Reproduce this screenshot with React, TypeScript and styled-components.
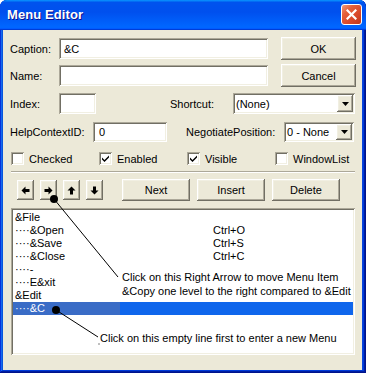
import React from "react";
import styled, { createGlobalStyle } from "styled-components";

const GlobalStyle = createGlobalStyle`
  html, body { margin: 0; padding: 0; background: #fff; }
  body { font-family: "Liberation Sans", Arial, sans-serif; font-size: 11px; color: #000; }
  * { box-sizing: border-box; }
`;

const sunken = `
  box-shadow: inset 1px 1px #aca899, inset -1px -1px #ffffff, inset 2px 2px #716f64, inset -2px -2px #f1efe2;
`;
const raised = `
  box-shadow: inset -1px -1px #716f64, inset 1px 1px #ffffff, inset -2px -2px #aca899, inset 2px 2px #f1efe2;
`;

const Window = styled.div`
  position: relative;
  width: 366px;
  height: 373px;
  display: flex;
  flex-direction: column;
  background: #0a45dc;
  border-radius: 7px 7px 0 0;
  padding: 0 4px 3px 3px;
  box-shadow: inset -1px -1px #00138c, inset 1px 1px #0831d9, inset -2px -2px #001ea0,
    inset 2px 2px #166aee, inset -3px -3px #003bda, inset 3px 3px #0855dd;
`;

const TitleBar = styled.div`
  height: 30px;
  margin: 0 -4px 0 -3px;
  padding: 0 4px 1px 7px;
  border-radius: 7px 7px 0 0;
  display: flex;
  align-items: center;
  justify-content: space-between;
  background: linear-gradient(180deg, #0997ff, #0053ee 8%, #0050ee 40%, #0066ff 88%, #0066ff 93%, #005bff 95%, #003dd7 96%, #003dd7);
`;

const Title = styled.span`
  font-family: "Liberation Sans", Arial, sans-serif;
  font-weight: bold;
  font-size: 13px;
  color: #fff;
  text-shadow: 1px 1px #0f1089;
  letter-spacing: 0.1px;
`;

const CloseButton = styled.div`
  width: 21px;
  height: 21px;
  border: 1px solid #fff;
  border-radius: 3px;
  display: flex;
  align-items: center;
  justify-content: center;
  background: radial-gradient(circle at 90% 90%, #cc4600 0, #dc6527 55%, #cd7546 70%, #ffccb2 90%, #fff 100%);
  background: linear-gradient(135deg, #f29a7b 0%, #e5603a 30%, #d8482a 65%, #c0371c 100%);
`;

const Body = styled.div`
  flex: 1;
  background: #ece9d8;
  padding: 7px 6px 0 7px;
  display: flex;
  flex-direction: column;
`;

const Row = styled.div<{ $mt?: number; $h: number }>`
  display: flex;
  align-items: center;
  height: ${(p) => p.$h}px;
  margin-top: ${(p) => p.$mt ?? 0}px;
`;

const Label = styled.span<{ $w: number; $ml?: number }>`
  flex-shrink: 0;
  width: ${(p) => p.$w}px;
  margin-left: ${(p) => p.$ml ?? 0}px;
  white-space: nowrap;
`;

const Field = styled.div<{ $w: number; $h: number; $pl?: number }>`
  flex-shrink: 0;
  width: ${(p) => p.$w}px;
  height: ${(p) => p.$h}px;
  background: #fff;
  ${sunken}
  display: flex;
  align-items: center;
  padding-left: ${(p) => p.$pl ?? 5}px;
  white-space: nowrap;
`;

const Combo = styled(Field)`
  position: relative;
  justify-content: space-between;
  padding-right: 2px;
`;

const DropButton = styled.div<{ $h: number }>`
  width: 16px;
  height: ${(p) => p.$h}px;
  background: #ece9d8;
  ${raised}
  display: flex;
  align-items: center;
  justify-content: center;
`;

const Button = styled.div<{ $w: number; $h: number; $ml?: number }>`
  flex-shrink: 0;
  width: ${(p) => p.$w}px;
  height: ${(p) => p.$h}px;
  margin-left: ${(p) => p.$ml ?? 0}px;
  background: #ece9d8;
  ${raised}
  display: flex;
  align-items: center;
  justify-content: center;
`;

const CheckRow = styled.div`
  display: grid;
  grid-template-columns: 88px 88px 88px 1fr;
  margin-top: 10px;
  height: 13px;
  padding-left: 1px;
`;

const CheckItem = styled.div`
  display: flex;
  align-items: center;
  gap: 5px;
  white-space: nowrap;
`;

const Box = styled.div`
  width: 13px;
  height: 13px;
  background: #fff;
  ${sunken}
  display: flex;
  align-items: center;
  justify-content: center;
`;

const Separator = styled.div`
  margin: 6px 0 0 1px;
  width: 344px;
  height: 2px;
  border-top: 1px solid #aca899;
  border-bottom: 1px solid #fff;
`;

const ButtonRow = styled.div`
  display: flex;
  align-items: center;
  height: 22px;
  margin-top: 6px;
  padding-left: 7px;
`;

const ListBox = styled.div`
  margin: 7px 0 0 1px;
  width: 344px;
  height: 147px;
  background: #fff;
  ${sunken}
  padding: 3px 2px;
`;

const Item = styled.div<{ $sel?: boolean }>`
  display: flex;
  height: 13px;
  line-height: 13px;
  padding-left: 2px;
  white-space: nowrap;
  color: ${(p) => (p.$sel ? "#fff" : "#000")};
  background: ${(p) =>
    p.$sel ? "linear-gradient(to right, #3a6cc6 0 107px, #0f66ec 107px)" : "transparent"};
`;

const ItemName = styled.span`
  width: 198px;
  flex-shrink: 0;
`;

const Overlay = styled.svg`
  position: absolute;
  left: 0;
  top: 0;
  pointer-events: none;
`;

const Note = styled.div<{ $x: number; $y: number }>`
  position: absolute;
  left: ${(p) => p.$x}px;
  top: ${(p) => p.$y}px;
  font-family: "Liberation Sans", Arial, sans-serif;
  font-size: 11px;
  line-height: 14px;
  color: #000;
  white-space: nowrap;
`;

const Tri = () => (
  <svg width="7" height="4" viewBox="0 0 7 4">
    <path d="M0 0H7L3.5 4Z" fill="#000" />
  </svg>
);

const Check = () => (
  <svg width="9" height="9" viewBox="0 0 9 9">
    <path d="M1 3.5 L3.5 6 L8 1.5 V3.5 L3.5 8 L1 5.5Z" fill="#000" />
  </svg>
);

const Arrow = ({ rot }: { rot: number }) => (
  <svg width="9" height="9" viewBox="0 0 9 9" style={{ transform: `rotate(${rot}deg)` }}>
    <path d="M0.5 4.5 L4.5 0.5 V3 H8.5 V6 H4.5 V8.5Z" fill="#000" />
  </svg>
);

const items: { name: string; key?: string; sel?: boolean }[] = [
  { name: "&File" },
  { name: "····&Open", key: "Ctrl+O" },
  { name: "····&Save", key: "Ctrl+S" },
  { name: "····&Close", key: "Ctrl+C" },
  { name: "····-" },
  { name: "····E&xit" },
  { name: "&Edit" },
  { name: "····&C", sel: true },
];

export default function App() {
  return (
    <>
      <GlobalStyle />
      <Window>
        <TitleBar>
          <Title>Menu Editor</Title>
          <CloseButton>
            <svg width="11" height="11" viewBox="0 0 11 11">
              <path d="M1.5 1.5 L9.5 9.5 M9.5 1.5 L1.5 9.5" stroke="#fff" strokeWidth="2.2" strokeLinecap="square" />
            </svg>
          </CloseButton>
        </TitleBar>
        <Body>
          <Row $h={23}>
            <Label $w={49}>Caption:</Label>
            <Field $w={209} $h={21}>&amp;C</Field>
            <Button $w={75} $h={23} $ml={13}>OK</Button>
          </Row>
          <Row $h={23} $mt={4}>
            <Label $w={49}>Name:</Label>
            <Field $w={209} $h={21} />
            <Button $w={75} $h={23} $ml={13}>Cancel</Button>
          </Row>
          <Row $h={21} $mt={6}>
            <Label $w={49}>Index:</Label>
            <Field $w={37} $h={21} />
            <Label $w={63} $ml={74}>Shortcut:</Label>
            <Combo $w={122} $h={21} $pl={3}>
              <span>(None)</span>
              <DropButton $h={17}><Tri /></DropButton>
            </Combo>
          </Row>
          <Row $h={20} $mt={8}>
            <Label $w={83}>HelpContextID:</Label>
            <Field $w={74} $h={20} $pl={6}>0</Field>
            <Label $w={98} $ml={19}>NegotiatePosition:</Label>
            <Combo $w={70} $h={20} $pl={3}>
              <span>0 - None</span>
              <DropButton $h={16}><Tri /></DropButton>
            </Combo>
          </Row>
          <CheckRow>
            <CheckItem><Box />Checked</CheckItem>
            <CheckItem><Box><Check /></Box>Enabled</CheckItem>
            <CheckItem><Box><Check /></Box>Visible</CheckItem>
            <CheckItem><Box />WindowList</CheckItem>
          </CheckRow>
          <Separator />
          <ButtonRow>
            <Button $w={17} $h={20}><Arrow rot={0} /></Button>
            <Button $w={17} $h={20} $ml={6}><Arrow rot={180} /></Button>
            <Button $w={17} $h={20} $ml={6}><Arrow rot={90} /></Button>
            <Button $w={17} $h={20} $ml={6}><Arrow rot={270} /></Button>
            <Button $w={68} $h={22} $ml={19}>Next</Button>
            <Button $w={68} $h={22} $ml={7}>Insert</Button>
            <Button $w={68} $h={22} $ml={7}>Delete</Button>
          </ButtonRow>
          <ListBox>
            {items.map((it, i) => (
              <Item key={i} $sel={it.sel}>
                <ItemName>{it.name}</ItemName>
                {it.key && <span>{it.key}</span>}
              </Item>
            ))}
          </ListBox>
        </Body>
        <Overlay width="366" height="373" viewBox="0 0 366 373">
          <line x1="54" y1="199" x2="118" y2="277" stroke="#000" strokeWidth="1" />
          <circle cx="54" cy="199" r="4" fill="#000" />
          <line x1="56" y1="310" x2="98" y2="337" stroke="#000" strokeWidth="1" />
          <circle cx="56" cy="310" r="4" fill="#000" />
          <rect x="98.5" y="343.5" width="1" height="1" fill="#000" />
        </Overlay>
        <Note $x={122} $y={270}>
          Click on this Right Arrow to move Menu Item
          <br />
          &amp;Copy one level to the right compared to &amp;Edit
        </Note>
        <Note $x={100} $y={331}>Click on this empty line first to enter a new Menu</Note>
      </Window>
    </>
  );
}
